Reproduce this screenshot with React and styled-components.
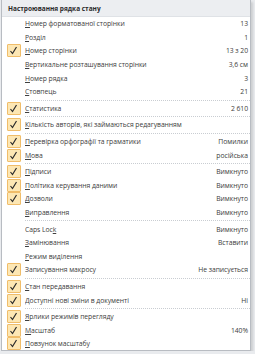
import React from "react";
import styled, { createGlobalStyle } from "styled-components";

const GlobalStyle = createGlobalStyle`
	html, body {
		margin: 0;
		padding: 0;
		background: #e9ebee;
		font-family: "Open Sans", "Noto Sans", sans-serif;
	}
`;

// ------------------------------

const items = [
	{ label: "Номер форматованої сторінки", key: "Н", value: "13" },
	{ label: "Розділ", key: "Р", value: "1" },
	{ label: "Номер сторінки", key: "Н", value: "13 з 20", checked: true },
	{ label: "Вертикальне розташування сторінки", key: "В", value: "3,6 см" },
	{ label: "Номер рядка", key: "Н", value: "3" },
	{ label: "Стовпець", key: "С", value: "21", sep: true },
	{ label: "Статистика", key: "С", value: "2 610", checked: true, sep: true },
	{ label: "Кількість авторів, які займаються редагуванням", key: "К", checked: true, sep: true },
	{ label: "Перевірка орфографії та граматики", key: "П", value: "Помилки", checked: true },
	{ label: "Мова", key: "М", value: "російська", checked: true, sep: true },
	{ label: "Підписи", key: "П", value: "Вимкнуто", checked: true },
	{ label: "Політика керування даними", key: "П", value: "Вимкнуто", checked: true },
	{ label: "Дозволи", key: "Д", value: "Вимкнуто", checked: true },
	{ label: "Виправлення", key: "В", value: "Вимкнуто", sep: true },
	{ label: "Caps Lock", keyAt: 8, value: "Вимкнуто" },
	{ label: "Замінювання", key: "З", value: "Вставити" },
	{ label: "Режим виділення", key: "Р" },
	{ label: "Записування макросу", value: "Не записується", checked: true, sep: true },
	{ label: "Стан передавання", key: "С", checked: true },
	{ label: "Доступні нові зміни в документі", key: "Д", value: "Ні", checked: true, sep: true },
	{ label: "Ярлики режимів перегляду", key: "Я", checked: true },
	{ label: "Масштаб", key: "М", value: "140%", checked: true },
	{ label: "Повзунок масштабу", key: "П", checked: true },
];

// ------------------------------

const Menu = styled.div`
	box-sizing: border-box;
	width: 250px;
	height: 351px;
	margin-left: 1px;
	background: #ffffff;
	border: 1px solid #b8bcc2;
	border-top: none;
	display: flex;
	flex-direction: column;
	overflow: hidden;
	box-shadow: 2px 2px 2px rgba(0, 0, 0, 0.12);
`;

const Header = styled.div`
	flex: none;
	height: 16px;
	display: flex;
	align-items: center;
	padding-left: 6px;
	background: #eceef1;
	border-bottom: 1px solid #dfe2e6;
	font-size: 6.5px;
	font-weight: 700;
	color: #2b2b2b;
`;

const Row = styled.div`
	flex: none;
	height: 13.6px;
	display: grid;
	grid-template-columns: 23px 1fr auto;
	align-items: center;
	padding-right: 2px;
	font-size: 6.8px;
	letter-spacing: -0.05px;
	color: #404040;
	white-space: nowrap;
`;

const Gutter = styled.div`
	display: flex;
	align-items: center;
	justify-content: center;
	height: 100%;
`;

const CheckBox = styled.div`
	box-sizing: border-box;
	width: 14px;
	height: 13px;
	display: flex;
	align-items: center;
	justify-content: center;
	background: #fde7b4;
	border: 1px solid #f0bd6a;
	border-radius: 1px;
`;

const Label = styled.span`
	overflow: hidden;
`;

const Key = styled.span`
	text-decoration: underline;
	text-underline-offset: 1px;
`;

const Value = styled.span`
	text-align: right;
`;

const Separator = styled.div`
	flex: none;
	height: 1px;
	margin: 1px 0 1px 23px;
	border-top: 1px dotted #c9cdd2;
	box-sizing: border-box;
`;

// ------------------------------

const Check = () => (
	<svg width="9" height="9" viewBox="0 0 9 9">
		<path d="M1.5 5 L3.5 7.5 L7.5 1" fill="none" stroke="#2a2a2a" strokeWidth="1.2" />
	</svg>
);

const renderLabel = ({ label, key, keyAt }) => {
	const i = keyAt != null ? keyAt : (key ? label.indexOf(key) : -1);
	if (i < 0) return label;
	return (
		<>
			{label.slice(0, i)}
			<Key>{label[i]}</Key>
			{label.slice(i + 1)}
		</>
	);
};

export default function App() {
	return (
		<>
			<GlobalStyle />
			<Menu>
				<Header>Настроювання рядка стану</Header>
				{
					items.map((item, n) => (
						<React.Fragment key = { n }>
							<Row>
								<Gutter>{item.checked && <CheckBox><Check /></CheckBox>}</Gutter>
								<Label>{renderLabel(item)}</Label>
								<Value>{item.value}</Value>
							</Row>
							{item.sep && <Separator />}
						</React.Fragment>
					))
				}
			</Menu>
		</>
	);
}
